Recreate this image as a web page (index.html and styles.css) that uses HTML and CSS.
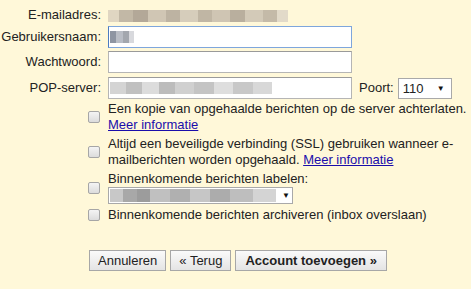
FILE: index.html
```html
<!DOCTYPE html>
<html lang="nl">
<head>
    <meta charset="UTF-8">
    <title>E-mail toevoegen</title>
    <link rel="stylesheet" href="styles.css">
</head>
<body>
    <div class="dialog">
        <div class="fields">
            <label class="label">E-mailadres:</label>
            <div class="value">
                <span class="blur blur-email"></span>
            </div>

            <label class="label" for="user">Gebruikersnaam:</label>
            <div class="value">
                <div class="input focused" id="user"><span class="blur blur-user"></span></div>
            </div>

            <label class="label" for="pass">Wachtwoord:</label>
            <div class="value">
                <div class="input" id="pass"></div>
            </div>

            <label class="label" for="server">POP-server:</label>
            <div class="value server-row">
                <div class="input" id="server"><span class="blur blur-server"></span></div>
                <span class="port-label">Poort:</span>
                <div class="select port-select"><span class="select-text">110</span><span class="arrow">&#9660;</span></div>
            </div>
        </div>

        <div class="options">
            <div class="option">
                <span class="checkbox"></span>
                <div class="option-text">
                    Een kopie van opgehaalde berichten op de server achterlaten.<br>
                    <a href="#">Meer informatie</a>
                </div>
            </div>
            <div class="option">
                <span class="checkbox"></span>
                <div class="option-text">
                    Altijd een beveiligde verbinding (SSL) gebruiken wanneer e-<br>mailberichten worden opgehaald. <a href="#">Meer informatie</a>
                </div>
            </div>
            <div class="option">
                <span class="checkbox"></span>
                <div class="option-text">
                    Binnenkomende berichten labelen:
                    <div class="select label-select"><span class="blur blur-label"></span><span class="arrow">&#9660;</span></div>
                </div>
            </div>
            <div class="option">
                <span class="checkbox"></span>
                <div class="option-text">Binnenkomende berichten archiveren (inbox overslaan)</div>
            </div>
        </div>

        <div class="buttons">
            <button class="btn">Annuleren</button>
            <button class="btn">&laquo; Terug</button>
            <button class="btn btn-primary">Account toevoegen &raquo;</button>
        </div>
    </div>
</body>
</html>
```

FILE: styles.css
```css
body {
    margin: 0;
    background-color: #fff8d9;
    font-family: 'Liberation Sans', Arial, sans-serif;
    font-size: 13px;
    line-height: 16px;
    color: #222;
}
.dialog {
    width: 471px;
    height: 289px;
    padding-top: 7px;
    box-sizing: border-box;
}
.fields {
    display: grid;
    grid-template-columns: 101px auto;
    column-gap: 7px;
    row-gap: 3px;
    align-items: center;
}
.label {
    text-align: right;
    white-space: nowrap;
}
.value {
    display: flex;
    align-items: center;
}
.input {
    width: 244px;
    height: 22px;
    box-sizing: border-box;
    border: 1px solid #b5b5b5;
    border-top-color: #9a9a9a;
    background-color: #fff;
    display: flex;
    align-items: center;
    padding-left: 1px;
}
.input.focused {
    border-color: #7ea6dc;
    border-left-color: #4d7cc0;
}
.blur {
    display: inline-block;
    flex: none;
    height: 12px;
}
/* blurred personal data, drawn as pixel blocks */
.blur-email {
    width: 180px;
    height: 12px;
    margin-top: 2px;
    background: linear-gradient(90deg, #e0d6c2 0 6%, #c2b8a6 6% 14%, #b3a898 14% 22%, #d0c6b4 22% 32%, #bdb3a2 32% 40%, #d6cdbb 40% 50%, #c0b6a4 50% 58%, #cfc5b3 58% 68%, #b9af9e 68% 76%, #d3cab8 76% 86%, #c4baa8 86% 94%, #e2dac9 94% 100%);
}
.blur-user {
    width: 24px;
    background: linear-gradient(90deg, #8e95a2 0 25%, #b9bdc5 25% 55%, #a3a7ae 55% 80%, #d8d9dd 80% 100%);
}
.blur-server {
    width: 162px;
    background: linear-gradient(90deg, #d4d4d4 0 10%, #c0c0c0 10% 20%, #dcdcdc 20% 30%, #bcbcbc 30% 40%, #d0d0d0 40% 52%, #c4c4c4 52% 64%, #dedede 64% 76%, #c8c8c8 76% 88%, #d8d8d8 88% 100%);
}
.blur-label {
    width: 166px;
    height: 13px;
    margin-right: 6px;
    background: linear-gradient(90deg, #c8c8c8 0 8%, #a8a8a8 8% 16%, #9c9c9c 16% 24%, #c0c0c0 24% 36%, #b0b0b0 36% 48%, #c6c6c6 48% 60%, #acacac 60% 72%, #bebebe 72% 86%, #d4d4d4 86% 100%);
}
.server-row {
    gap: 0;
}
.port-label {
    margin-left: 7px;
    margin-right: 4px;
}
.select {
    display: flex;
    align-items: center;
    height: 21px;
    box-sizing: border-box;
    border: 1px solid #a9a9a9;
    background-color: #fff;
}
.port-select {
    width: 54px;
    margin-top: 2px;
    padding-left: 4px;
}
.select-text {
    flex: 1;
}
.arrow {
    font-size: 8px;
    line-height: 8px;
    margin-right: 6px;
    color: #111;
}
.label-select {
    width: 185px;
    height: 17px;
    padding-left: 1px;
}
.options {
    margin-left: 88px;
    margin-top: 2px;
}
.option {
    display: flex;
    align-items: center;
    gap: 8px;
    margin-bottom: 3px;
}
.checkbox {
    flex: none;
    width: 12px;
    height: 12px;
    box-sizing: border-box;
    border: 1px solid #a6a6a6;
    border-radius: 2px;
    background: linear-gradient(#f4f4f4, #dcdcdc);
}
.option-text a {
    color: #1a0dab;
}
.buttons {
    display: flex;
    gap: 4px;
    margin-left: 89px;
    margin-top: 27px;
}
.btn {
    height: 21px;
    padding: 0 8px;
    font-family: 'Liberation Sans', Arial, sans-serif;
    font-size: 13px;
    color: #222;
    border: 1px solid #a7a7a7;
    background: linear-gradient(#fafafa, #e4e4e4);
}
.btn-primary {
    font-weight: bold;
    padding: 0 9px;
}
```
